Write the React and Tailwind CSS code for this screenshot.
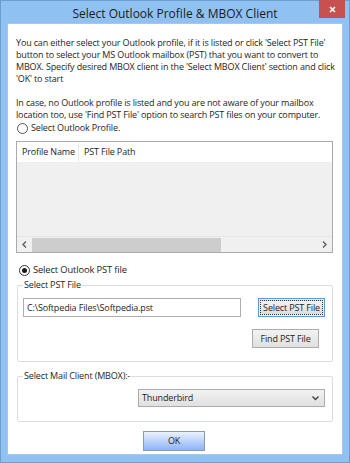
export default function App() {
  const font = { fontFamily: '"Open Sans", "Noto Sans", sans-serif' };
  return (
    <div
      className="w-[350px] h-[463px] bg-[#8fc2f3] border border-[#6e9ed0] flex flex-col text-[#1e1e1e]"
      style={font}
    >
      {/* Title bar */}
      <div className="relative h-[22px] shrink-0 flex items-center justify-center">
        <span className="text-[12px] leading-none text-[#1b1b1b] mt-[3px] whitespace-nowrap">
          Select Outlook Profile &amp; MBOX Client
        </span>
        <div className="absolute top-[-1px] right-[4px] w-[26px] h-[18px] bg-[#c75050] flex items-center justify-center">
          <svg width="7" height="7" viewBox="0 0 7 7">
            <path d="M1 1 L6 6 M6 1 L1 6" stroke="white" strokeWidth="1.6" />
          </svg>
        </div>
      </div>

      {/* Client area */}
      <div className="mx-[6px] mb-[7px] flex-1 min-h-0 overflow-hidden bg-white border border-[#a6c8ec] flex flex-col pl-[8px] pr-[9px] pt-[13px] text-[9px] leading-[12px] tracking-[-0.15px] whitespace-nowrap">
        <p>
          You can either select your Outlook profile, if it is listed or click 'Select PST File'
          <br />
          button to select your MS Outlook mailbox (PST) that you want to convert to
          <br />
          MBOX. Specify desired MBOX client in the 'Select MBOX Client' section and click
          <br />
          'OK' to start
        </p>
        <p className="mt-[12px]">
          In case, no Outlook profile is listed and you are not aware of your mailbox
          <br />
          location too, use 'Find PST File' option to search PST files on your computer.
        </p>

        {/* Radio 1 */}
        <div className="flex items-center gap-[3px] mt-[1px] h-[12px] pl-[1px]">
          <span className="w-[11px] h-[11px] rounded-full border border-[#555] bg-white" />
          <span>Select Outlook Profile.</span>
        </div>

        {/* List view */}
        <div className="mt-[7px] h-[112px] shrink-0 border border-[#aaaaaa] flex flex-col bg-[#f0f0f0]">
          <div className="h-[21px] bg-white flex items-center border-b border-[#eaf0f6]">
            <div className="w-[62px] h-full flex items-center pl-[5px] border-r border-[#e5ebf3]">
              Profile Name
            </div>
            <div className="pl-[5px]">PST File Path</div>
          </div>
          <div className="flex-1" />
          <div className="h-[16px] flex items-center bg-[#f0f0f0] border-t border-[#e6e6e6]">
            <div className="w-[15px] flex items-center justify-center">
              <svg width="5" height="7" viewBox="0 0 5 7">
                <path d="M4 0.5 L1 3.5 L4 6.5" stroke="#606060" strokeWidth="1.4" fill="none" />
              </svg>
            </div>
            <div className="w-[189px] h-[14px] bg-[#cdcdcd]" />
            <div className="flex-1" />
            <div className="w-[15px] flex items-center justify-center">
              <svg width="5" height="7" viewBox="0 0 5 7">
                <path d="M1 0.5 L4 3.5 L1 6.5" stroke="#606060" strokeWidth="1.4" fill="none" />
              </svg>
            </div>
          </div>
        </div>

        {/* Radio 2 */}
        <div className="flex items-center gap-[3px] mt-[10px] h-[14px] pl-[3px]">
          <span className="w-[11px] h-[11px] rounded-full border border-[#333] bg-white flex items-center justify-center">
            <span className="w-[5px] h-[5px] rounded-full bg-[#1a1a1a]" />
          </span>
          <span className="text-[9.4px]">Select Outlook PST file</span>
        </div>

        {/* Group box: Select PST File */}
        <div className="relative mt-[8px] h-[77px] shrink-0 border border-[#dcdcdc] rounded-[2px] ml-[1px] flex flex-col px-[5px] pt-[12px]">
          <span className="absolute -top-[7px] left-[5px] bg-white px-[1px]">Select PST File</span>
          <div className="flex items-start">
            <div className="w-[218px] h-[19px] border border-[#abadb3] flex items-center pl-[3px]">
              C:\Softpedia Files\Softpedia.pst
            </div>
            <div className="ml-[17px] w-[67px] h-[19px] border border-[#5c9ad6] bg-[#e5f1fb] p-[1px]">
              <div className="w-full h-full border border-dotted border-[#333] flex items-center justify-center bg-gradient-to-b from-[#f2f2f2] to-[#dcdcdc]">
                Select PST File
              </div>
            </div>
          </div>
          <div className="flex justify-end mt-[12px] pr-[8px]">
            <div className="w-[67px] h-[19px] border border-[#acacac] bg-gradient-to-b from-[#f2f2f2] to-[#e0e0e0] flex items-center justify-center">
              Find PST File
            </div>
          </div>
        </div>

        {/* Group box: Select Mail Client */}
        <div className="relative mt-[14px] h-[46px] shrink-0 border border-[#dcdcdc] rounded-[2px] ml-[1px] flex flex-col pt-[12px]">
          <span className="absolute -top-[7px] left-[5px] bg-white px-[1px]">Select Mail Client (MBOX):-</span>
          <div className="flex justify-end pr-[7px]">
            <div className="w-[187px] h-[18px] border border-[#acacac] bg-gradient-to-b from-[#f2f2f2] to-[#e0e0e0] flex items-center pl-[3px] pr-[5px]">
              <span className="flex-1">Thunderbird</span>
              <svg width="7" height="5" viewBox="0 0 7 5">
                <path d="M0.5 0.5 L3.5 3.5 L6.5 0.5" stroke="#404040" strokeWidth="1.4" fill="none" />
              </svg>
            </div>
          </div>
        </div>

        {/* OK */}
        <div className="flex mt-[9px] pl-[127px]">
          <div className="w-[62px] h-[20px] border border-[#8a99b3] bg-gradient-to-b from-[#eaf2fd] via-[#bcd3fa] to-[#8fb3f6] flex items-center justify-center">
            OK
          </div>
        </div>
      </div>
    </div>
  );
}
